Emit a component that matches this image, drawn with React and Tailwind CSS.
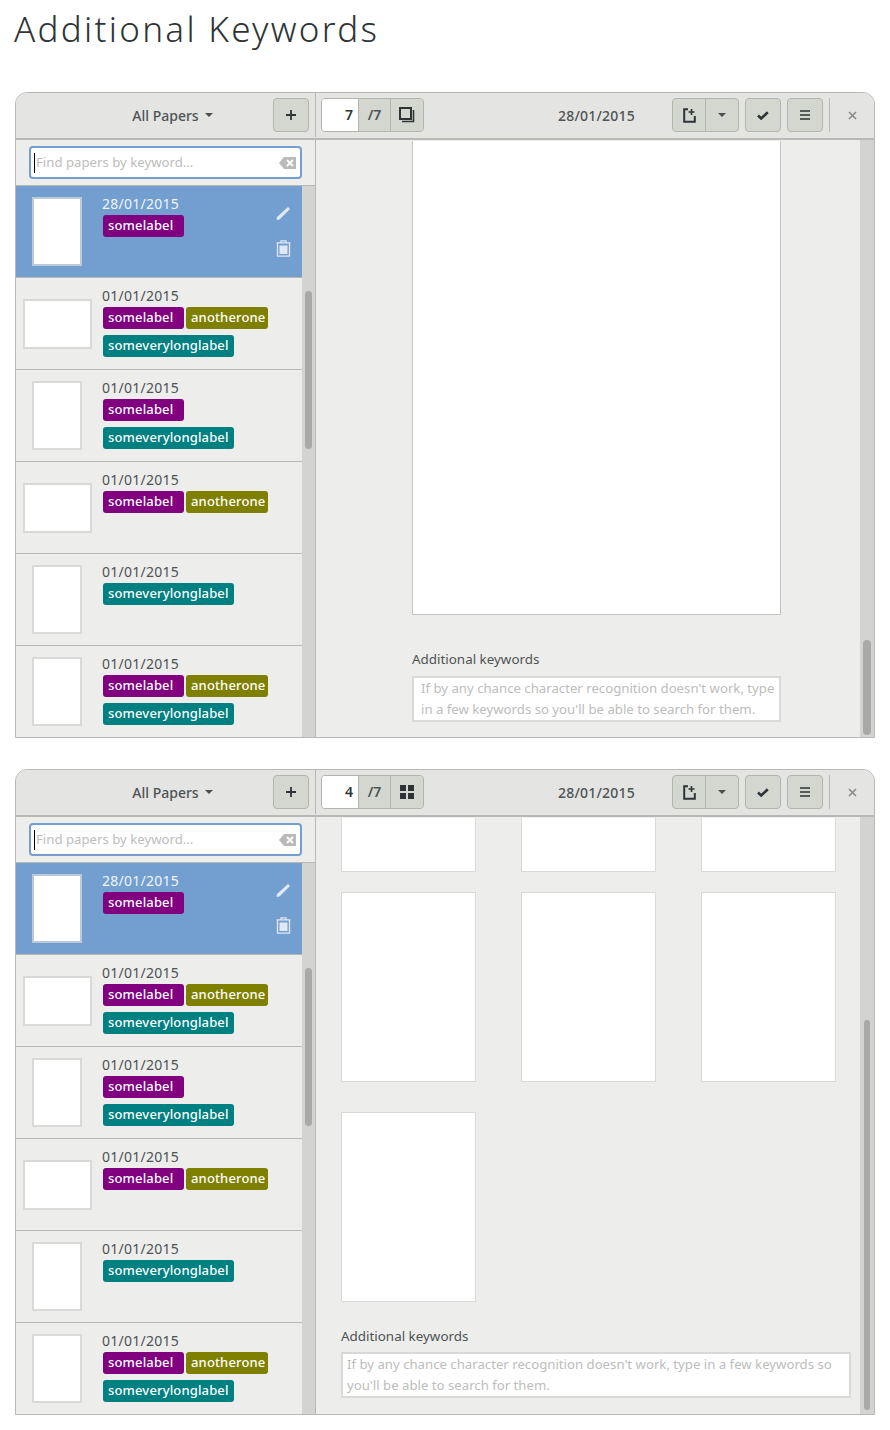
const font = "font-['Noto_Sans',_'Open_Sans',_sans-serif]"

const papers = [
  { date: "28/01/2015", wide: false, selected: true, labels: [["somelabel"]] },
  { date: "01/01/2015", wide: true, labels: [["somelabel", "anotherone"], ["someverylonglabel"]] },
  { date: "01/01/2015", wide: false, labels: [["somelabel"], ["someverylonglabel"]] },
  { date: "01/01/2015", wide: true, labels: [["somelabel", "anotherone"]] },
  { date: "01/01/2015", wide: false, labels: [["someverylonglabel"]] },
  { date: "01/01/2015", wide: false, labels: [["somelabel", "anotherone"], ["someverylonglabel"]] },
]

function Label({ text }) {
  const styles = {
    somelabel: "bg-[#800080] w-[81px]",
    anotherone: "bg-[#808000] w-[82px]",
    someverylonglabel: "bg-[#008080] w-[131px]",
  }
  return (
    <span className={`${styles[text]} block h-[22px] rounded-[3px] pl-[5px] text-[13px] leading-[20px] font-medium tracking-[0.15px] text-white`}>
      {text}
    </span>
  )
}

function Caret({ className = "" }) {
  return (
    <svg width="8" height="4" viewBox="0 0 8 4" className={className}>
      <path d="M0 0h8L4 4z" fill="#4a4f50" />
    </svg>
  )
}

function PaperRow({ paper }) {
  const dateColor = paper.selected ? "text-[#f1f4f8]" : "text-[#4e5354]"
  return (
    <div className={`flex h-[92px] shrink-0 border-b border-[#b8b8b5] ${paper.selected ? "bg-[#729fcf]" : ""}`}>
      <div className="flex w-[82px] shrink-0 items-center justify-center">
        <div className={`border-2 bg-white ${paper.wide ? "h-[50px] w-[69px]" : "h-[69px] w-[50px]"} ${paper.selected ? "border-[#bcc9d9]" : "border-[#d9d9d7]"}`} />
      </div>
      <div className="flex-1 pl-[4px] pt-[9px]">
        <div className={`text-[14px] leading-[17px] tracking-[0.25px] ${dateColor}`}>{paper.date}</div>
        <div className="flex flex-col gap-[6px] pl-[1px] pt-[3px]">
          {paper.labels.map((line, i) => (
            <div key={i} className="flex gap-[2px]">
              {line.map(t => <Label key={t} text={t} />)}
            </div>
          ))}
        </div>
      </div>
      {paper.selected && (
        <div className="flex w-[38px] flex-col items-center gap-[19px] pt-[20px]">
          <svg width="15" height="15" viewBox="0 0 15 15">
            <path d="M12 1 14 3 3.5 13.5 0.5 14 1 11z" fill="#dfe8f3" />
          </svg>
          <svg width="15" height="17" viewBox="0 0 15 17" fill="none" stroke="#dfe8f3" strokeWidth="1.3">
            <path d="M0.5 2.8h14M5 2.6V0.8h5v1.8M1.5 3v13.2h12V3" />
            <path d="M3.5 5.5h8v8.5h-8z" fill="#dfe8f3" stroke="none" />
          </svg>
        </div>
      )}
    </div>
  )
}

function Sidebar() {
  return (
    <div className="flex w-[300px] shrink-0 flex-col overflow-hidden border-r border-[#b8b8b5]">
      <div className="h-[46px] shrink-0 border-b border-[#b8b8b5] px-[13px] pt-[6px]">
        <div className="flex h-[33px] items-center rounded-[4px] border-2 border-[#729fcf] bg-white pl-[3px] pr-[4px] text-[13.2px] text-[#bcbdbc]">
          <span className="h-[20px] w-px shrink-0 bg-black" />
          <span className="ml-[1px] flex-1">Find papers by keyword...</span>
          <svg width="17" height="12" viewBox="0 0 17 12">
            <path d="M5 0h12v12H5L0 6z" fill="#b9bab9" />
            <path d="m8 3 6 6m0-6-6 6" stroke="#fff" strokeWidth="1.8" />
          </svg>
        </div>
      </div>
      <div className="flex min-h-0 flex-1">
        <div className="flex flex-1 flex-col overflow-hidden">
          {papers.map((p, i) => <PaperRow key={i} paper={p} />)}
        </div>
        <div className="w-[13px] shrink-0 bg-[#d3d3d2] pl-[3px] pt-[105px]">
          <div className="h-[158px] w-[7px] rounded-full bg-[#a9a9a8]" />
        </div>
      </div>
    </div>
  )
}

function ToolBtn({ className = "", children }) {
  return (
    <div className={`flex h-[34px] items-center justify-center rounded-[4px] border border-[#b2b4ae] bg-[#d3d7cf] ${className}`}>
      {children}
    </div>
  )
}

function Header({ page, viewIcon }) {
  return (
    <div className="flex h-[47px] shrink-0 border-b-2 border-[#b8b8b5] bg-[#e4e4e3] pb-[1px] text-[#4e5354]">
      <div className="flex w-[300px] shrink-0 items-center border-r border-[#b8b8b5]">
        <div className="flex flex-1 items-center justify-center gap-[6px] pl-[56px] text-[14px] font-medium">
          All Papers <Caret />
        </div>
        <ToolBtn className="mr-[6px] w-[36px]">
          <svg width="12" height="12" viewBox="0 0 12 12"><path d="M6 1v10M1 6h10" stroke="#2e3436" strokeWidth="1.8" /></svg>
        </ToolBtn>
      </div>
      <div className="flex flex-1 items-center pl-[5px]">
        <div className="flex h-[34px] w-[103px] rounded-[4px] border border-[#b2b4ae] text-[14px] font-semibold">
          <div className="w-[36px] rounded-l-[3px] bg-white pr-[5px] text-right leading-[32px] text-[#2e3436]">{page}</div>
          <div className="w-[33px] border-x border-[#b2b4ae] bg-[#d3d7cf] text-center leading-[32px]">/7</div>
          <div className="flex flex-1 items-center justify-center rounded-r-[3px] bg-[#d3d7cf]">{viewIcon}</div>
        </div>
        <div className="flex-1 pl-[97px] text-center text-[14px] font-medium tracking-[0.2px]">28/01/2015</div>
        <ToolBtn className="w-[67px]">
          <div className="flex h-full w-[33px] items-center justify-center border-r border-[#b2b4ae]">
            <svg width="13" height="15" viewBox="0 0 13 15" fill="none" stroke="#2e3436" strokeWidth="2">
              <path d="M5 1.2H1.2v12.6h10.6V8" />
              <path d="M8.5 1v6M5.5 4h6" strokeWidth="1.6" />
            </svg>
          </div>
          <div className="flex flex-1 justify-center"><Caret /></div>
        </ToolBtn>
        <ToolBtn className="ml-[6px] w-[36px]">
          <svg width="12" height="9" viewBox="0 0 12 9"><path d="M1 4.5l3.2 3L10.8 1.2" fill="none" stroke="#2e3436" strokeWidth="2.6" /></svg>
        </ToolBtn>
        <ToolBtn className="ml-[6px] w-[36px]">
          <svg width="10" height="10" viewBox="0 0 10 10"><path d="M0 1h10M0 5h10M0 9h10" stroke="#2e3436" strokeWidth="1.6" /></svg>
        </ToolBtn>
        <div className="ml-[6px] h-[34px] w-px bg-[#b8b8b5]" />
        <div className="flex w-[44px] justify-center">
          <svg width="9" height="9" viewBox="0 0 9 9"><path d="m1 1 7 7m0-7-7 7" stroke="#8a8d8c" strokeWidth="1.7" /></svg>
        </div>
      </div>
    </div>
  )
}

function Keywords({ wideLayout }) {
  return (
    <div className={wideLayout ? "pl-[25px] pr-[9px]" : "pl-[96px] pr-[79px]"}>
      <div className="text-[13.4px] leading-[17px] text-[#4e5354]">Additional keywords</div>
      <div className={`h-[46px] border-2 border-[#d9d9d7] bg-white text-[13.2px] leading-[21px] whitespace-nowrap text-[#bcbdbc] ${wideLayout ? "mt-[7px] pl-[4px]" : "mt-[8px] pl-[7px]"}`}>
        {wideLayout
          ? <>If by any chance character recognition doesn't work, type in a few keywords so<br />you'll be able to search for them.</>
          : <>If by any chance character recognition doesn't work, type<br />in a few keywords so you'll be able to search for them.</>}
      </div>
    </div>
  )
}

function Scrollbar({ top, height, thin }) {
  return (
    <div className="w-[14px] shrink-0 bg-[#d3d3d2]" style={{ paddingTop: top }}>
      <div className={`mx-auto rounded-full bg-[#a9a9a8] ${thin ? "w-[6px]" : "w-[8px]"}`} style={{ height }} />
    </div>
  )
}

function SinglePage() {
  return (
    <div className="flex min-h-0 flex-1">
      <div className="flex-1 pt-[1px]">
        <div className="ml-[96px] h-[474px] w-[369px] border-x border-b border-[#c4c4c2] bg-white" />
        <div className="pt-[36px]"><Keywords /></div>
      </div>
      <Scrollbar top={500} height={95} />
    </div>
  )
}

function Thumb({ className = "" }) {
  return <div className={`w-[135px] border border-[#d9d9d7] bg-white ${className}`} />
}

function GridPages() {
  return (
    <div className="flex min-h-0 flex-1">
      <div className="flex-1 pt-[1px]">
        <div className="flex gap-[45px] pl-[25px]">
          <Thumb className="h-[54px] border-t-0" />
          <Thumb className="h-[54px] border-t-0" />
          <Thumb className="h-[54px] border-t-0" />
        </div>
        <div className="flex gap-[45px] pl-[25px] pt-[20px]">
          <Thumb className="h-[190px]" />
          <Thumb className="h-[190px]" />
          <Thumb className="h-[190px]" />
        </div>
        <div className="pl-[25px] pt-[30px]">
          <Thumb className="h-[190px]" />
        </div>
        <div className="pt-[26px]"><Keywords wideLayout /></div>
      </div>
      <Scrollbar top={203} height={390} thin />
    </div>
  )
}

function AppWindow({ page, viewIcon, children, className = "" }) {
  return (
    <div className={`flex h-[646px] flex-col overflow-hidden rounded-t-[12px] border border-[#b8b8b5] bg-[#ededeb] ${className}`}>
      <Header page={page} viewIcon={viewIcon} />
      <div className="flex min-h-0 flex-1">
        <Sidebar />
        {children}
      </div>
    </div>
  )
}

export default function App() {
  return (
    <div className={`${font} h-[1430px] bg-white px-[15px]`}>
      <h1 className="-ml-px pt-[6px] text-[35px] leading-[46px] font-light tracking-[2.3px] text-[#2e3436]">
        Additional Keywords
      </h1>
      <AppWindow
        className="mt-[40px]"
        page="7"
        viewIcon={
          <svg width="16" height="16" viewBox="0 0 16 16" fill="none" stroke="#2e3436">
            <path d="M1 1h11v11H1z" strokeWidth="2" />
            <path d="M14.5 3v11.5H3" strokeWidth="1.6" />
          </svg>
        }
      >
        <SinglePage />
      </AppWindow>
      <AppWindow
        className="mt-[31px]"
        page="4"
        viewIcon={
          <svg width="14" height="14" viewBox="0 0 14 14" fill="#2e3436">
            <path d="M0 0h6v6H0zM8 0h6v6H8zM0 8h6v6H0zM8 8h6v6H8z" />
          </svg>
        }
      >
        <GridPages />
      </AppWindow>
    </div>
  )
}
